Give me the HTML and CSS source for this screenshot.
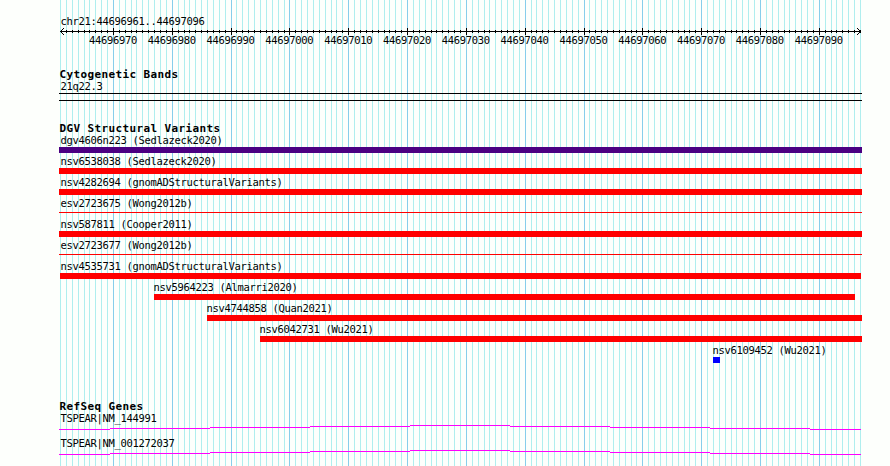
FILE: index.html
```html
<!DOCTYPE html>
<html lang="en">
<head>
    <meta charset="utf-8">
    <title>chr21:44696961..44697096</title>
    <link rel="stylesheet" href="styles.css">
</head>
<body>
    <!-- 17 bases span exactly 100px, so the grid repeats every 100px -->
    <svg class="grid" width="890" height="466" shape-rendering="crispEdges" aria-hidden="true">
        <g class="minor">
            <path id="bases" d="M60 0h1v466h-1zM66 0h1v466h-1zM72 0h1v466h-1zM78 0h1v466h-1zM84 0h1v466h-1zM89 0h1v466h-1zM95 0h1v466h-1zM101 0h1v466h-1zM107 0h1v466h-1zM113 0h1v466h-1zM119 0h1v466h-1zM125 0h1v466h-1zM131 0h1v466h-1zM136 0h1v466h-1zM142 0h1v466h-1zM148 0h1v466h-1zM154 0h1v466h-1z"/>
            <use href="#bases" x="100"/>
            <use href="#bases" x="200"/>
            <use href="#bases" x="300"/>
            <use href="#bases" x="400"/>
            <use href="#bases" x="500"/>
            <use href="#bases" x="600"/>
            <use href="#bases" x="700"/>
            <path d="M860 0h1v466h-1z"/>
        </g>
        <path class="major" d="M113 0h1v466h-1zM172 0h1v466h-1zM231 0h1v466h-1zM289 0h1v466h-1zM348 0h1v466h-1zM407 0h1v466h-1zM466 0h1v466h-1zM525 0h1v466h-1zM584 0h1v466h-1zM642 0h1v466h-1zM701 0h1v466h-1zM760 0h1v466h-1zM819 0h1v466h-1z"/>
    </svg>

    <main class="panel">
        <header class="ruler">
            <div class="label">chr21:44696961..44697096</div>
            <svg class="scale" width="803" height="7" shape-rendering="crispEdges" aria-hidden="true">
                <path id="ticks" d="M7.5 2v3M13.5 2v3M19.5 2v3M25.5 2v3M30.5 2v3M36.5 2v3M42.5 2v3M48.5 2v3M54.5 2v3M60.5 2v3M66.5 2v3M72.5 2v3M77.5 2v3M83.5 2v3M89.5 2v3M95.5 2v3M101.5 2v3"/>
                <use href="#ticks" x="100"/>
                <use href="#ticks" x="200"/>
                <use href="#ticks" x="300"/>
                <use href="#ticks" x="400"/>
                <use href="#ticks" x="500"/>
                <use href="#ticks" x="600"/>
                <use href="#ticks" x="700"/>
                <path d="M1 3.5h801"/>
                <path d="M54.5 0v7M113.5 0v7M172.5 0v7M230.5 0v7M289.5 0v7M348.5 0v7M407.5 0v7M466.5 0v7M525.5 0v7M583.5 0v7M642.5 0v7M701.5 0v7M760.5 0v7"/>
                <path d="M2 2.5h1M3 1.5h1M4 .5h1M2 4.5h1M3 5.5h1M4 6.5h1M800 2.5h1M799 1.5h1M798 .5h1M800 4.5h1M799 5.5h1M798 6.5h1"/>
            </svg>
            <div class="numbers">
                <span>44696970</span><span>44696980</span><span>44696990</span><span>44697000</span><span>44697010</span><span>44697020</span><span>44697030</span><span>44697040</span><span>44697050</span><span>44697060</span><span>44697070</span><span>44697080</span><span>44697090</span>
            </div>
        </header>

        <section class="cytobands">
            <h2>Cytogenetic Bands</h2>
            <div class="label">21q22.3</div>
            <div class="band"></div>
        </section>

        <section class="variants">
            <h2>DGV Structural Variants</h2>
            <div class="variant"><div class="label">dgv4606n223 (Sedlazeck2020)</div><div class="bar merged"></div></div>
            <div class="variant"><div class="label">nsv6538038 (Sedlazeck2020)</div><div class="bar"></div></div>
            <div class="variant"><div class="label">nsv4282694 (gnomADStructuralVariants)</div><div class="bar"></div></div>
            <div class="variant"><div class="label">esv2723675 (Wong2012b)</div><div class="bar thin"></div></div>
            <div class="variant"><div class="label">nsv587811 (Cooper2011)</div><div class="bar"></div></div>
            <div class="variant"><div class="label">esv2723677 (Wong2012b)</div><div class="bar thin"></div></div>
            <div class="variant"><div class="label">nsv4535731 (gnomADStructuralVariants)</div><div class="bar inset"></div></div>
            <div class="variant partial" style="margin-left: 95px; width: 701px"><div class="label">nsv5964223 (Almarri2020)</div><div class="bar"></div></div>
            <div class="variant partial" style="margin-left: 148px; width: 655px"><div class="label">nsv4744858 (Quan2021)</div><div class="bar"></div></div>
            <div class="variant partial" style="margin-left: 201px; width: 602px"><div class="label">nsv6042731 (Wu2021)</div><div class="bar"></div></div>
            <div class="variant partial" style="margin-left: 654px; width: 7px"><div class="label">nsv6109452 (Wu2021)</div><div class="bar gain"></div></div>
        </section>

        <section class="genes">
            <h2>RefSeq Genes</h2>
            <div class="gene">
                <div class="label">TSPEAR|NM_144991</div>
                <svg class="intron" width="803" height="5" shape-rendering="crispEdges" aria-hidden="true">
                    <path d="M0 4.5h51M51 3.5h100M151 2.5h100M251 1.5h100M351 .5h100M451 1.5h100M551 2.5h100M651 3.5h100M751 4.5h51"/>
                </svg>
            </div>
            <div class="gene">
                <div class="label">TSPEAR|NM_001272037</div>
                <svg class="intron" width="803" height="5" shape-rendering="crispEdges" aria-hidden="true">
                    <path d="M0 4.5h51M51 3.5h100M151 2.5h100M251 1.5h100M351 .5h100M451 1.5h100M551 2.5h100M651 3.5h100M751 4.5h51"/>
                </svg>
            </div>
        </section>
    </main>
</body>
</html>
```
FILE: styles.css
```css
body {
    margin: 0;
    height: 466px;
    overflow: hidden;
    background: #fdfffc;
    color: #000;
    font-family: "DejaVu Sans Mono", monospace;
    font-size: 10.5px;
    letter-spacing: -0.321px;
}

svg {
    display: block;
}

/* base grid behind all tracks */
.grid {
    position: absolute;
    top: 0;
    left: 0;
}
.minor {
    fill: #afeeee;
}
.major {
    fill: #87ceeb;
}

.panel {
    position: relative;
    box-sizing: border-box;
    width: 803px;
    margin-left: 59px;
    padding-top: 15px;
}

.label {
    height: 12px;
    padding-left: 1.5px;
    line-height: 12px;
    white-space: nowrap;
}

h2 {
    height: 12px;
    margin: 0;
    padding-left: 0.5px;
    font-size: 11px;
    line-height: 14px;
    letter-spacing: 0.378px;
    white-space: nowrap;
}

/* ruler */
.ruler {
    height: 53px;
}
.scale {
    margin-top: 1px;
    stroke: #000;
}
.numbers {
    display: flex;
    margin-left: 24.5px;
    line-height: 10px;
}
.numbers span {
    flex: 0 0 58.8235px;
    text-align: center;
}

/* tracks */
.cytobands {
    height: 54px;
}
.band {
    box-sizing: border-box;
    height: 8px;
    margin-top: 1px;
    border: solid #000;
    border-width: 1px 0;
}

.variants {
    height: 278px;
}
.variants h2 {
    margin-bottom: 1px;
}
.variant {
    height: 21px;
}
.variant .label {
    line-height: 10px;
}
.partial .label {
    padding-left: 0;
    margin-left: -0.5px;
}
.bar {
    height: 6px;
    background: #f00;
}
.merged {
    background: #4b0082;
}
.gain {
    background: #00f;
}
.thin {
    height: 1px;
    margin-top: 2px;
}
.inset {
    margin: 0 1px;
}

.gene {
    height: 25px;
}
.intron {
    margin-top: 1px;
    stroke: #f0f;
}
```
